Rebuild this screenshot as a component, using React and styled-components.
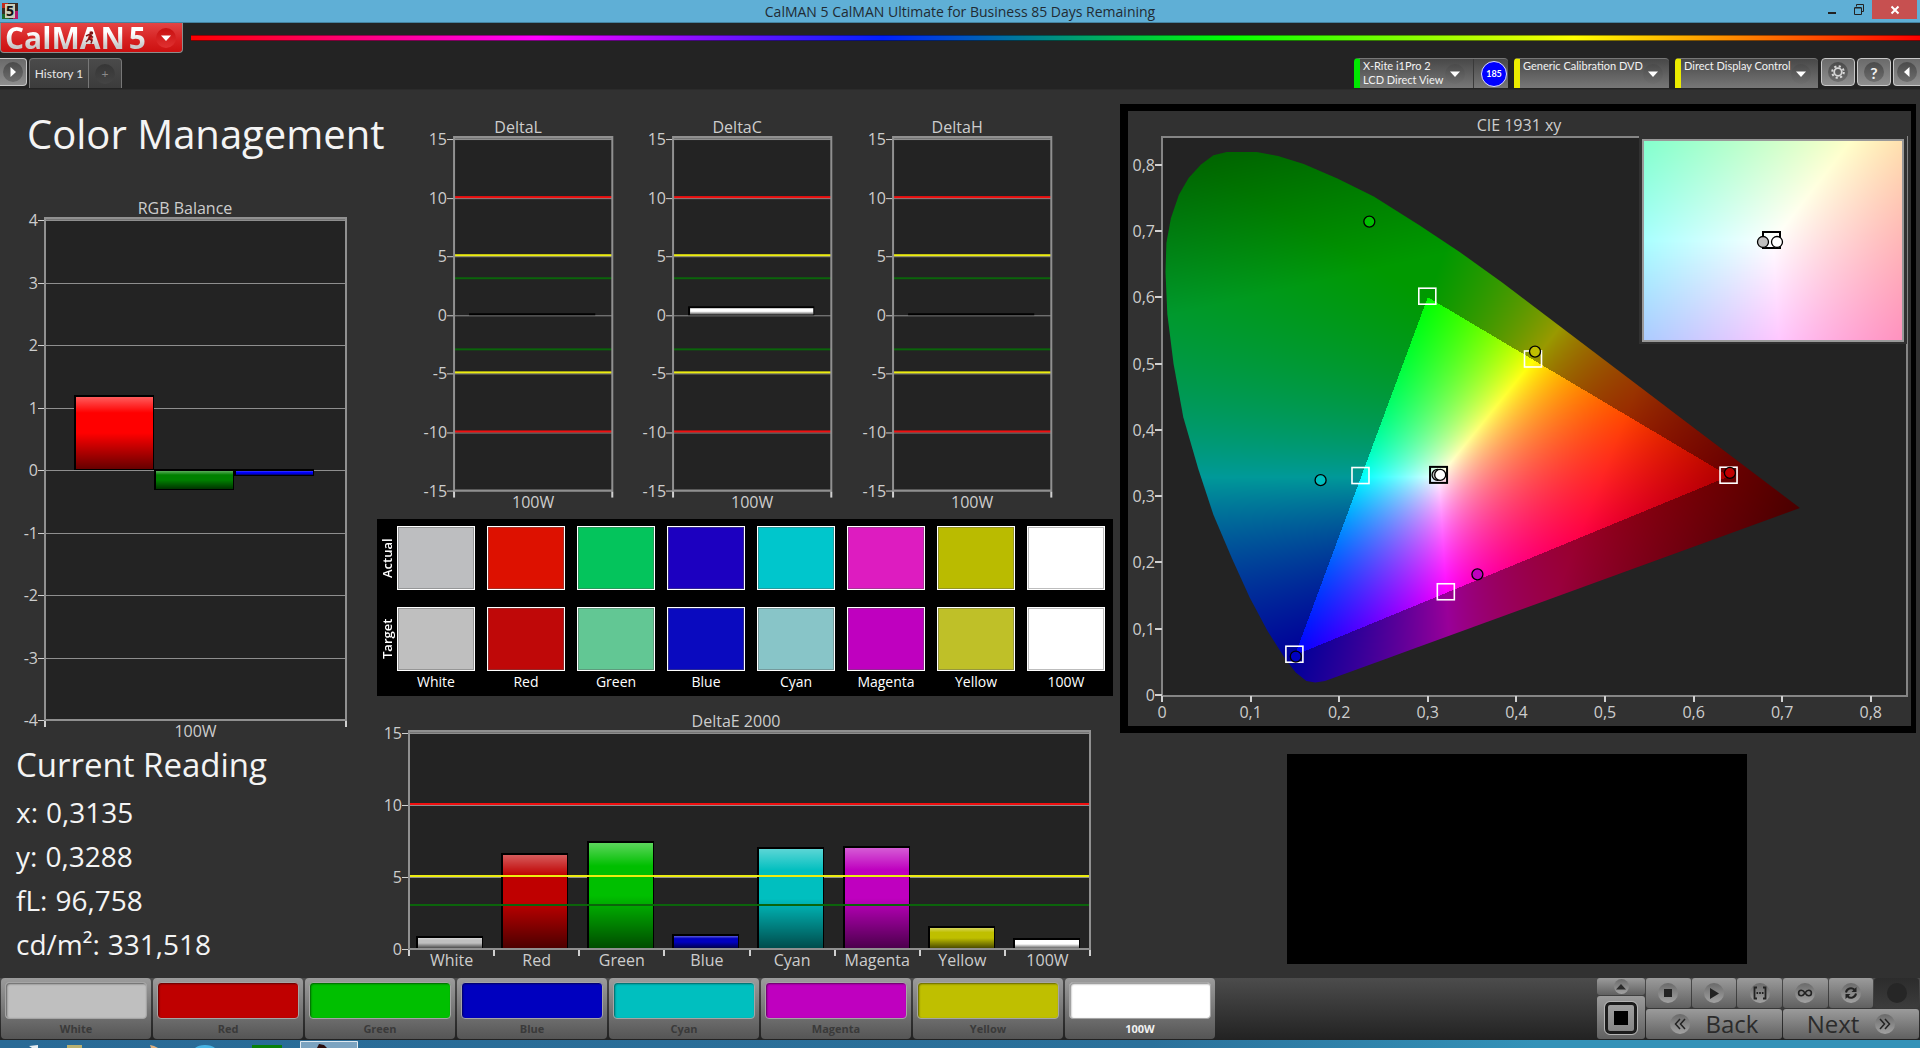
import React, { useEffect, useRef } from "react";
import styled, { createGlobalStyle } from "styled-components";

const GlobalStyle = createGlobalStyle`
  * {
    box-sizing: border-box;
  }

  body {
    margin: 0;
    background: #232323;
    font-family: "Open Sans", "Noto Sans", sans-serif;
  }

  h1, h2, p, dl, dd, dt {
    margin: 0;
    font-weight: 400;
  }

  button {
    margin: 0;
    padding: 0;
    border: 0;
    background: none;
    font-family: inherit;
    color: inherit;
    cursor: pointer;
  }

  svg {
    display: block;
  }
`;

const Shell = styled.div`
  display: flex;
  flex-direction: column;
  min-height: 100vh;
  overflow-x: hidden;
`;

// title bar
const TitleBar = styled.header`
  display: grid;
  grid-template-columns: 1fr auto 1fr;
  height: 23px;
  border-bottom: 1px solid #4583a1;
  background: #5fafd6;
`;

const AppIcon = styled.svg`
  width: 16px;
  height: 16px;
  margin: 3px 0 0 2px;
`;

const WindowTitle = styled.p`
  color: #1f2b33;
  font-size: 14px;
  line-height: 24px;
`;

const WindowButtons = styled.div`
  display: flex;
  justify-content: flex-end;
  padding-right: 3px;
`;

const WindowButton = styled.button`
  display: flex;
  align-items: center;
  justify-content: center;
  width: ${(props) => (props.$close ? 45 : 27)}px;
  height: 19px;
  background: ${(props) => (props.$close ? "#c75050" : "transparent")};
`;

// toolbar
const BrandRow = styled.div`
  display: flex;
  align-items: flex-start;
  gap: 8px;
`;

const Brand = styled.button`
  display: flex;
  align-items: center;
  justify-content: space-between;
  width: 183px;
  height: 30px;
  padding: 0 6px 0 4px;
  border: 1px solid #8d8d8d;
  border-top: 0;
  border-radius: 0 0 4px 4px;
  background: linear-gradient(#e34545, #d62020 60%, #cc1010);
`;

const BrandName = styled.span`
  position: relative;
  display: flex;
  gap: 4px;
  background: linear-gradient(#fff 30%, #c9c9c9 80%);
  background-clip: text;
  color: transparent;
  font-size: 30px;
  font-weight: 700;
  line-height: 28px;
`;

const Runner = styled.svg`
  position: absolute;
  top: 7px;
  left: 78px;
  width: 14px;
  height: 14px;
`;

const Spectrum = styled.div`
  flex: 1;
  height: 6px;
  margin-top: 12px;
  border-top: 1px solid rgba(0, 0, 0, 0.4);
  border-bottom: 1px solid rgba(0, 0, 0, 0.5);
  background: linear-gradient(90deg, #f00, #f0f, #0020ff, #0f0, #ff0, #f00);
`;

const ToolRow = styled.div`
  display: flex;
  justify-content: space-between;
  height: 31px;
  margin-top: 5px;
  font-family: Lato, "Open Sans", sans-serif;
  font-size: 12px;
`;

const ToolGroup = styled.div`
  display: flex;
  gap: ${(props) => props.$gap || 0}px;
`;

const Knob = styled.span`
  display: flex;
  align-items: center;
  justify-content: center;
  flex: none;
  width: ${(props) => (props.$small ? 15 : 20)}px;
  height: ${(props) => (props.$small ? 15 : 20)}px;
  border-radius: 50%;
  background: ${(props) => props.$fill || "linear-gradient(#4a4a4a, #6e6e6e)"};
`;

const SquareButton = styled.button`
  display: flex;
  align-items: center;
  justify-content: center;
  width: ${(props) => props.$width || 34}px;
  height: 28px;
  border: 1px solid #c8c8c8;
  border-left-width: ${(props) => (props.$edge === "left" ? 0 : 1)}px;
  border-right-width: ${(props) => (props.$edge === "right" ? 0 : 1)}px;
  border-radius: ${(props) =>
    props.$edge === "left"
      ? "0 4px 4px 0"
      : props.$edge === "right"
      ? "4px 0 0 4px"
      : "4px"};
  background: linear-gradient(#6a6a6a, #8f8f8f);
  color: #f0f0f0;
  font-size: 16px;
`;

const Tabs = styled.div`
  display: flex;
  height: 30px;
  border: 1px solid #777;
  border-bottom: 0;
  border-radius: 4px 4px 0 0;
  background: linear-gradient(#4a4a4a, #3c3c3c);
`;

const Tab = styled.button`
  display: flex;
  align-items: center;
  justify-content: center;
  width: ${(props) => (props.$add ? 33 : 58)}px;
  border-left: ${(props) => (props.$add ? "1px solid #777" : "0")};
  color: ${(props) => (props.$add ? "#8a8a8a" : "#e6e6e6")};
  font-size: 12px;
`;

const Device = styled.div`
  display: flex;
  height: 30px;
  width: ${(props) => props.$width}px;
  border-left: 6px solid ${(props) => props.$status};
  border-top: 1px solid #777;
  border-radius: 4px 4px 0 0;
  background: linear-gradient(#484848, #777);
  color: #f2f2f2;
`;

const DeviceButton = styled.button`
  display: flex;
  flex: 1;
  justify-content: space-between;
  align-items: flex-start;
  padding: 0 8px 0 3px;
  text-align: left;
  font-size: 11px;
  line-height: 14px;
  white-space: nowrap;

  ${Knob} {
    margin-top: 5px;
  }
`;

const Counter = styled.span`
  display: flex;
  align-items: center;
  justify-content: flex-end;
  width: 35px;
  padding-right: 1px;
  border-left: 1px solid #3a3a3a;
`;

const CounterDot = styled.span`
  width: 26px;
  height: 26px;
  border: 1px solid #dcdcff;
  border-radius: 50%;
  background: #00f;
  color: #fff;
  font-size: 9px;
  font-weight: 700;
  line-height: 24px;
  text-align: center;
`;

// workspace
const Workspace = styled.main`
  display: grid;
  grid-template-columns: minmax(0, 376fr) minmax(0, 738fr) minmax(0, 806fr);
  flex: 1;
  align-items: start;
  border-top: 1px solid #2b2b2b;
  background: #313131;
`;

const Column = styled.section`
  display: flex;
  flex-direction: column;
`;

const PageTitle = styled.h1`
  padding: 20px 0 0 27px;
  margin-bottom: 38px;
  color: #f4f4f4;
  font-size: 40px;
  line-height: 48px;
  white-space: nowrap;
`;

const ReadingTitle = styled.h2`
  padding-left: 16px;
  margin-bottom: 4px;
  color: #f4f4f4;
  font-size: 33px;
  line-height: 42px;
`;

const Readings = styled.dl`
  padding-left: 16px;
  color: #f4f4f4;
  font-size: 28px;
  line-height: 44px;
`;

const Reading = styled.div`
  display: flex;
  gap: 8px;
`;

const Chart = styled.svg`
  width: 100%;
  height: auto;
  font-family: "Open Sans", "Noto Sans", sans-serif;
  font-size: 16px;
  fill: #cdcdcd;
`;

const DeltaRow = styled.div`
  display: grid;
  grid-template-columns: repeat(3, minmax(0, 1fr));
  padding: 28px 41px 0 39px;
`;

const SwatchPanel = styled.div`
  display: flex;
  flex-direction: column;
  margin: 5px 1px 10px;
  padding: 7px 8px 3px 0;
  background: #000;
  color: #fff;
  font-size: 14px;
`;

const SwatchRow = styled.div`
  display: grid;
  grid-template-columns: 20px minmax(0, 1fr);
  margin-bottom: ${(props) => props.$gap || 0}px;
`;

const SwatchLine = styled.div`
  display: grid;
  grid-template-columns: repeat(8, minmax(0, 1fr));
  grid-column: 2;
  gap: 12px;
`;

const RowName = styled.span`
  writing-mode: vertical-rl;
  transform: rotate(180deg);
  height: 64px;
  font-size: 13px;
  font-weight: 600;
  line-height: 20px;
  text-align: center;
`;

const Swatch = styled.span`
  height: 64px;
  border: 1px solid #fff;
  box-shadow: inset 0 0 0 1px rgba(90, 90, 90, 0.4);
  background: ${(props) => props.$fill};
`;

const SwatchName = styled.span`
  line-height: 22px;
  text-align: center;
`;

const CiePanel = styled.div`
  margin: 14px 4px 21px 6px;
  border: solid #000;
  border-width: 7px 5px 7px 8px;
`;

const Preview = styled.div`
  align-self: center;
  width: 57%;
  aspect-ratio: 459 / 210;
  background: #000;
`;

// bottom bar
const BottomBar = styled.footer`
  display: flex;
  justify-content: space-between;
  height: 62px;
  padding-right: 1px;
  background: linear-gradient(#4c4c4c, #222);
`;

const PatchList = styled.div`
  display: flex;
  gap: 2px;
  padding-left: 1px;
`;

const PatchButton = styled.button`
  display: flex;
  flex-direction: column;
  align-items: center;
  width: 150px;
  height: 61px;
  padding: 4px 4px 0;
  border-radius: 4px;
  background: linear-gradient(#9c9c9c, #555);
  color: ${(props) => (props.$active ? "#f0f0f0" : "#3a3a3a")};
  font-size: 11px;
  font-weight: 700;
  line-height: 20px;
`;

const PatchColor = styled.span`
  width: 100%;
  height: 38px;
  border: 1px solid #a5a5a5;
  border-radius: 4px;
  box-shadow: inset 1px 1px 2px rgba(0, 0, 0, 0.5);
  background: ${(props) => props.$fill};
`;

const Transport = styled.div`
  display: grid;
  grid-template-columns: 48px 273px;
  gap: 1px;
  height: 61px;
  color: #2b2b2b;
`;

const StopColumn = styled.div`
  display: grid;
  grid-template-rows: 17px 43px;
  gap: 1px;
`;

const Controls = styled.div`
  display: grid;
  grid-template-columns: repeat(6, 1fr);
  grid-template-rows: 30px 30px;
  gap: 1px;
`;

const Control = styled.button`
  display: flex;
  align-items: center;
  justify-content: center;
  gap: 16px;
  grid-column: span ${(props) => props.$span || 1};
  border-radius: 3px;
  background: ${(props) =>
    props.$dark
      ? "linear-gradient(#2c2c2c, #3c3c3c)"
      : "linear-gradient(#9b9b9b, #606060)"};
  font-size: 24px;
  line-height: 28px;
`;

const StopFrame = styled.span`
  display: flex;
  align-items: center;
  justify-content: center;
  width: 32px;
  height: 32px;
  border: 3px solid #1c1c1c;
  border-radius: 5px;
  outline: 1px solid #b5b5b5;
  background: linear-gradient(#a0a0a0, #858585);
`;

const Taskbar = styled.div`
  height: 8px;
  background: linear-gradient(90deg, #296a96, #2b719b 60%, #3492b8 80%);
`;

const names = ["White", "Red", "Green", "Blue", "Cyan", "Magenta", "Yellow", "100W"];

const patchColors = [
  "#bfbfbf", "#bf0000", "#00bf00", "#0000bf",
  "#00bfbf", "#bf00bf", "#bfbf00", "#ffffff",
];

const actualColors = [
  "#bdbec0", "#dd1100", "#04c45c", "#1c00c0",
  "#00c6cc", "#dd1cc0", "#babb00", "#ffffff",
];

const targetColors = [
  "#bfbfbf", "#bf0808", "#62c794", "#0a0abf",
  "#88c5c8", "#bf00bf", "#bfc028", "#ffffff",
];

const deltaE = [0.85, 6.6, 7.4, 0.95, 7.0, 7.1, 1.5, 0.7];

const readings = [
  ["x:", "0,3135"],
  ["y:", "0,3288"],
  ["fL:", "96,758"],
  ["cd/m²:", "331,518"],
];

const limits = [
  [10, "#f01010"],
  [5, "#ecec10"],
  [3, "#0b640b"],
];

const mirrored = [...limits, ...limits.map(([v, color]) => [-v, color])];

function BarChart({ id, title, titleX, size, plot, range, step, bars, categories, limits = [] }) {
  const [width, height] = size;
  const [left, top, right, bottom] = plot;
  const [min, max] = range;
  const y = (v) => Math.round(bottom - ((v - min) / (max - min)) * (bottom - top));
  const slot = (right - left) / categories.length;

  const ticks = [];
  for (let v = min; v <= max; v += step) ticks.push(v);

  return (
    <Chart viewBox={`0 0 ${width} ${height}`} role="img" aria-label={title}>
      <defs>
        <linearGradient id={`${id}-gloss`} x1="0" y1="0" x2="0" y2="1">
          <stop offset="0" stopColor="#fff" stopOpacity="0.36" />
          <stop offset="0.22" stopColor="#fff" stopOpacity="0" />
          <stop offset="0.5" stopColor="#000" stopOpacity="0" />
          <stop offset="1" stopColor="#000" stopOpacity="0.6" />
        </linearGradient>
      </defs>
      <text x={titleX} y={top - 6} textAnchor="middle">{title}</text>
      <rect x={left} y={top - 2} width={right - left} height={bottom - top + 2} fill="#232323" />
      <rect x={left} y={top - 2} width={right - left} height="3" fill="#747474" />
      {ticks.map((v) => (
        <g key={v}>
          <rect x={left} y={y(v)} width={right - left} height="1" fill="#8e8e8e" />
          <rect x={left - 7} y={y(v)} width="7" height="1" fill="#d0d0d0" />
          <text x={left - 7} y={y(v) + 6} textAnchor="end">{v}</text>
        </g>
      ))}
      {bars.map((bar) => {
        const y1 = Math.min(y(bar.value), y(0));
        const h = Math.max(1, Math.abs(y(bar.value) - y(0)));
        return (
          <g key={bar.x}>
            <rect x={bar.x} y={y1 - 1} width={bar.width} height={h + 1} fill="#000" />
            {h > 1 && (
              <>
                <rect x={bar.x + 2} y={y1 + 1} width={bar.width - 3} height={h - 2} fill={bar.fill} />
                <rect x={bar.x + 2} y={y1 + 1} width={bar.width - 3} height={h - 2} fill={`url(#${id}-gloss)`} />
              </>
            )}
          </g>
        );
      })}
      {limits.map(([v, color]) => (
        <rect key={v} x={left} y={y(v) - 2} width={right - left} height="2" fill={color} />
      ))}
      <path d={`M${left} ${top - 2}V${bottom}H${right}V${top - 2}Z`} fill="none" stroke="#909090" strokeWidth="2" />
      {categories.map((name, i) => (
        <g key={name}>
          <rect x={Math.round(left + slot * i) - 1} y={bottom + 1} width="2" height="6" fill="#d0d0d0" />
          <text x={left + slot * (i + 0.5)} y={bottom + 17} textAnchor="middle">{name}</text>
        </g>
      ))}
      <rect x={right - 1} y={bottom + 1} width="2" height="6" fill="#d0d0d0" />
    </Chart>
  );
}

// chromaticity -> full brightness rgb, dimmed outside of the gamut and towards the ends of the spectrum
function chromaColor(x, y) {
  const z = 1 - x - y;
  const r = 3.2406 * x - 1.5372 * y - 0.4986 * z;
  const g = -0.9689 * x + 1.8758 * y + 0.0415 * z;
  const b = 0.0557 * x - 0.204 * y + 1.057 * z;
  const peak = Math.max(r, g, b);
  let level = Math.min(r, g, b) < 0 ? 0.6 : 1;

  const deepRed = x - 0.29 * (y - 0.33) - 0.497;
  const deepGreen = y - 0.3 * (x - 0.1) - 0.6;
  if (deepRed > 0) level *= 1 - 2.2 * deepRed;
  if (deepGreen > 0) level *= 1 - 1.5 * deepGreen;

  return [r, g, b].map((c) => (Math.max(0, c) / peak) * 255 * level);
}

function ChromaField({ width, height, x0, x1, y0, y1 }) {
  const ref = useRef(null);

  useEffect(() => {
    const ctx = ref.current.getContext("2d");
    const image = ctx.createImageData(width, height);
    for (let j = 0; j < height; j++) {
      for (let i = 0; i < width; i++) {
        const x = x0 + ((x1 - x0) * (i + 0.5)) / width;
        const y = y1 - ((y1 - y0) * (j + 0.5)) / height;
        image.data.set([...chromaColor(x, y), 255], (j * width + i) * 4);
      }
    }
    ctx.putImageData(image, 0, 0);
  }, [width, height, x0, x1, y0, y1]);

  return <Field ref={ref} width={width} height={height} />;
}

const Field = styled.canvas`
  display: block;
`;

const locus = [
  [0.184, 0.021], [0.173, 0.019], [0.163, 0.021], [0.151, 0.034], [0.14, 0.053],
  [0.119, 0.097], [0.099, 0.147], [0.079, 0.206], [0.058, 0.272], [0.041, 0.341],
  [0.024, 0.419], [0.013, 0.5], [0.006, 0.575], [0.004, 0.638], [0.005, 0.682],
  [0.01, 0.719], [0.019, 0.754], [0.03, 0.78], [0.044, 0.8], [0.058, 0.814],
  [0.073, 0.819], [0.107, 0.819], [0.131, 0.813], [0.16, 0.801], [0.198, 0.779],
  [0.239, 0.752], [0.291, 0.708], [0.336, 0.668], [0.384, 0.622], [0.72, 0.282],
];

const targets = [
  [0.3, 0.6], [0.64, 0.33], [0.15, 0.06], [0.2246, 0.3295], [0.3209, 0.1542], [0.4193, 0.5053],
];

const measured = [
  [0.234, 0.714, "#00bf00"],
  [0.421, 0.518, "#bfbf00"],
  [0.179, 0.324, "#00bfbf"],
  [0.356, 0.182, "#bf00bf"],
  [0.641, 0.335, "#bf0000"],
  [0.151, 0.058, "#0000bf"],
  [0.311, 0.332, "#bfbfbf"],
  [0.314, 0.332, "#ffffff"],
];

function CieChart() {
  const left = 34;
  const bottom = 584;
  const px = (x) => left + x * 886;
  const py = (y) => bottom - y * 663;
  const outline = `M${locus.map(([x, y]) => `${px(x).toFixed(1)} ${py(y).toFixed(1)}`).join("L")}Z`;
  const steps = [0, 1, 2, 3, 4, 5, 6, 7, 8];
  const label = (n) => (n === 0 ? "0" : `0,${n}`);

  return (
    <Chart viewBox="0 0 783 615" role="img" aria-label="CIE 1931 xy">
      <clipPath id="locus">
        <path d={outline} />
      </clipPath>
      <text x="391" y="20" textAnchor="middle">CIE 1931 xy</text>
      <rect x={left} y="26" width="745" height="559" fill="#232323" stroke="#858585" strokeWidth="2" />
      {steps.map((n) => (
        <g key={n}>
          <rect x={left - 7} y={Math.round(py(n / 10)) - 1} width="7" height="2" fill="#d0d0d0" />
          <text x={left - 7} y={py(n / 10) + 6} textAnchor="end">{label(n)}</text>
          <rect x={Math.round(px(n / 10)) - 1} y={bottom + 1} width="2" height="6" fill="#d0d0d0" />
          <text x={px(n / 10)} y={bottom + 23} textAnchor="middle">{label(n)}</text>
        </g>
      ))}
      <g clipPath="url(#locus)">
        <foreignObject x={left} y="26" width="745" height="558">
          <ChromaField width={745} height={558} x0={0} x1={745 / 886} y0={0} y1={558 / 663} />
        </foreignObject>
      </g>
      {targets.map(([x, y]) => (
        <rect key={x} x={px(x) - 9} y={py(y) - 9} width="17" height="16" fill="none" stroke="#fff" strokeWidth="1.6" />
      ))}
      <rect x={px(0.3127) - 9} y={py(0.332) - 8} width="17" height="16" fill="none" stroke="#000" strokeWidth="2" />
      {measured.map(([x, y, fill]) => (
        <circle key={x} cx={px(x)} cy={py(y)} r="5.5" fill={fill} stroke="#000" strokeWidth="1.3" />
      ))}

      {/* close-up of the white point */}
      <rect x="511" y="25" width="268" height="208" fill="#313131" />
      <foreignObject x="515" y="29" width="260" height="201">
        <ChromaField width={260} height={201} x0={0.2872} x1={0.3382} y0={0.3035} y1={0.3545} />
      </foreignObject>
      <rect x="515" y="29" width="260" height="201" fill="none" stroke="#999" strokeWidth="2" />
      <rect x="635" y="121" width="17" height="16" fill="none" stroke="#000" strokeWidth="2" />
      <circle cx="635" cy="131" r="5.5" fill="#bfbfbf" stroke="#000" strokeWidth="1.3" />
      <circle cx="649" cy="131" r="5.5" fill="#fff" stroke="#000" strokeWidth="1.3" />
    </Chart>
  );
}

const Caret = ({ rotate = 0, color = "#fff" }) => (
  <svg width="12" height="12" viewBox="0 0 12 12" fill={color}>
    <path d="M1 3.5h10L6 9z" transform={`rotate(${rotate} 6 6)`} />
  </svg>
);

const controlIcons = [
  ["Stop", <path d="M4 4h8v8H4z" fill="#222" />],
  ["Play", <path d="M4 3l9 5.5L4 14z" fill="#222" />],
  [
    "Read series",
    <path d="M5 2.5H2.5v11H5M11 2.5h2.5v11H11M4.5 8h1.6M7.2 8h1.6M9.9 8h1.6" fill="none" stroke="#222" strokeWidth="1.8" />,
  ],
  [
    "Read continuous",
    <path d="M8 8C6.500 5.800 5.500 5.300 4.300 5.300a2.700 2.700 0 0 0 0 5.400C5.500 10.700 6.500 10.200 8 8s2.500-2.700 3.700-2.700a2.700 2.700 0 0 1 0 5.400C10.500 10.700 9.500 10.200 8 8z" fill="none" stroke="#222" strokeWidth="1.6" />,
  ],
  [
    "Refresh",
    <g fill="none" stroke="#222" strokeWidth="2">
      <path d="M3 7.500a5 5 0 0 1 8.500-2.700M13 8.500a5 5 0 0 1-8.500 2.700" />
      <path d="M13.500 2v5h-5zM2.500 14V9h5z" fill="#222" stroke="none" />
    </g>,
  ],
];

const lightKnob = "linear-gradient(#6a6a6a, #a2a2a2)";

const App = () => {
  return (
    <>
      <GlobalStyle />
      <Shell>
        <TitleBar>
          <AppIcon viewBox="0 0 16 16">
            <rect width="16" height="16" fill="#3c2c22" />
            <path d="M0 0h6v5H0z" fill="#c22a1a" />
            <path d="M0 11h7v5H0z" fill="#1d6b2b" />
            <path d="M11 8h5v8h-5z" fill="#b3166a" />
            <path d="M3 1h10v14H3z" fill="#c9cdb8" />
            <text x="4" y="13" fontSize="14" fontWeight="700" fill="#111">5</text>
          </AppIcon>
          <WindowTitle>CalMAN 5 CalMAN Ultimate for Business 85 Days Remaining</WindowTitle>
          <WindowButtons>
            <WindowButton aria-label="Minimize">
              <svg width="10" height="10"><path d="M1 7h8v2H1z" fill="#222" /></svg>
            </WindowButton>
            <WindowButton aria-label="Restore">
              <svg width="12" height="12" viewBox="0 0 12 12" fill="none" stroke="#222">
                <path d="M3.500 2.500v-2h7v7h-2M1.500 4h7v6.500h-7zM1.500 3.500h7" />
              </svg>
            </WindowButton>
            <WindowButton $close aria-label="Close">
              <svg width="10" height="10" viewBox="0 0 10 10" stroke="#fff" strokeWidth="2">
                <path d="M1.500 1.500l7 7M8.500 1.500l-7 7" />
              </svg>
            </WindowButton>
          </WindowButtons>
        </TitleBar>

        <BrandRow>
          <Brand>
            <BrandName>
              <span>CalMAN</span>
              <span>5</span>
              <Runner viewBox="0 0 14 14" fill="none" stroke="#7a1414" strokeWidth="1.500">
                <circle cx="8.500" cy="2" r="1" fill="#7a1414" />
                <path d="M3 5l3-1.500 2 1 2 2M7.500 5L6 8l3 1.500-1 3M6 8l-3 3" />
              </Runner>
            </BrandName>
            <Knob $fill="linear-gradient(#c81010, #e03030)">
              <Caret />
            </Knob>
          </Brand>
          <Spectrum />
        </BrandRow>

        <ToolRow>
          <ToolGroup $gap={2}>
            <SquareButton $width={27} $edge="left" aria-label="Show workflow">
              <Knob>
                <Caret rotate={-90} />
              </Knob>
            </SquareButton>
            <Tabs>
              <Tab>History 1</Tab>
              <Tab $add aria-label="Add history">
                <Knob $fill="linear-gradient(#363636, #444)">+</Knob>
              </Tab>
            </Tabs>
          </ToolGroup>

          <ToolGroup $gap={3}>
            <ToolGroup $gap={6}>
              <Device $status="#00e800" $width={154}>
                <DeviceButton>
                  <span>
                    X-Rite i1Pro 2
                    <br />
                    LCD Direct View
                  </span>
                  <Knob>
                    <Caret />
                  </Knob>
                </DeviceButton>
                <Counter>
                  <CounterDot>185</CounterDot>
                </Counter>
              </Device>
              <Device $status="#ecec00" $width={155}>
                <DeviceButton>
                  Generic Calibration DVD
                  <Knob>
                    <Caret />
                  </Knob>
                </DeviceButton>
              </Device>
              <Device $status="#ecec00" $width={143}>
                <DeviceButton>
                  Direct Display Control
                  <Knob>
                    <Caret />
                  </Knob>
                </DeviceButton>
              </Device>
            </ToolGroup>
            <ToolGroup $gap={2}>
              <SquareButton aria-label="Settings">
                <Knob>
                  <svg width="14" height="14" viewBox="0 0 14 14" fill="none" stroke="#d8d8d8">
                    <circle cx="7" cy="7" r="3.800" strokeWidth="1.800" />
                    <circle cx="7" cy="7" r="5.800" strokeWidth="2" strokeDasharray="2.200 2.355" />
                  </svg>
                </Knob>
              </SquareButton>
              <SquareButton aria-label="Help">
                <Knob>
                  <b>?</b>
                </Knob>
              </SquareButton>
              <SquareButton $width={27} $edge="right" aria-label="Show panel">
                <Knob>
                  <Caret rotate={90} />
                </Knob>
              </SquareButton>
            </ToolGroup>
          </ToolGroup>
        </ToolRow>

        <Workspace>
          <Column>
            <PageTitle>Color Management</PageTitle>
            <BarChart
              id="rgb"
              title="RGB Balance"
              titleX={185}
              size={[376, 548]}
              plot={[45, 24, 346, 524]}
              range={[-4, 4]}
              step={1}
              categories={["100W"]}
              bars={[
                { x: 74, width: 80, value: 1.18, fill: "#ff0000" },
                { x: 154, width: 80, value: -0.32, fill: "#008000" },
                { x: 234, width: 80, value: -0.1, fill: "#0000ff" },
              ]}
            />
            <ReadingTitle>Current Reading</ReadingTitle>
            <Readings>
              {readings.map(([name, value]) => (
                <Reading key={name}>
                  <dt>{name}</dt>
                  <dd>{value}</dd>
                </Reading>
              ))}
            </Readings>
          </Column>

          <Column>
            <DeltaRow>
              {[["DeltaL", 0.04], ["DeltaC", 0.6], ["DeltaH", 0.04]].map(([title, value]) => (
                <BarChart
                  key={title}
                  id={title}
                  title={title}
                  titleX={103}
                  size={[219, 395]}
                  plot={[39, 21, 197, 372]}
                  range={[-15, 15]}
                  step={5}
                  categories={["100W"]}
                  limits={mirrored}
                  bars={[{ x: 54, width: 126, value, fill: "#ffffff" }]}
                />
              ))}
            </DeltaRow>

            <SwatchPanel>
              <SwatchRow $gap={17}>
                <RowName>Actual</RowName>
                <SwatchLine>
                  {actualColors.map((fill, i) => (
                    <Swatch key={names[i]} $fill={fill} />
                  ))}
                </SwatchLine>
              </SwatchRow>
              <SwatchRow>
                <RowName>Target</RowName>
                <SwatchLine>
                  {targetColors.map((fill, i) => (
                    <Swatch key={names[i]} $fill={fill} />
                  ))}
                </SwatchLine>
              </SwatchRow>
              <SwatchRow>
                <SwatchLine>
                  {names.map((name) => (
                    <SwatchName key={name}>{name}</SwatchName>
                  ))}
                </SwatchLine>
              </SwatchRow>
            </SwatchPanel>

            <BarChart
              id="delta-e"
              title="DeltaE 2000"
              titleX={360}
              size={[738, 270]}
              plot={[33, 27, 714, 243]}
              range={[0, 15]}
              step={5}
              categories={names}
              limits={limits}
              bars={deltaE.map((value, i) => ({
                x: 40 + Math.round(i * 85.3),
                width: 67,
                value,
                fill: patchColors[i],
              }))}
            />
          </Column>

          <Column>
            <CiePanel>
              <CieChart />
            </CiePanel>
            <Preview />
          </Column>
        </Workspace>

        <BottomBar>
          <PatchList>
            {names.map((name, i) => (
              <PatchButton key={name} $active={name === "100W"}>
                <PatchColor $fill={patchColors[i]} />
                {name}
              </PatchButton>
            ))}
          </PatchList>

          <Transport>
            <StopColumn>
              <Control aria-label="Expand">
                <Knob $small $fill={lightKnob}>
                  <Caret rotate={180} color="#2b2b2b" />
                </Knob>
              </Control>
              <Control aria-label="Abort">
                <StopFrame>
                  <svg width="14" height="14"><rect width="14" height="14" /></svg>
                </StopFrame>
              </Control>
            </StopColumn>
            <Controls>
              {controlIcons.map(([name, icon]) => (
                <Control key={name} aria-label={name}>
                  <Knob $fill={lightKnob}>
                    <svg width="16" height="16" viewBox="0 0 16 16">{icon}</svg>
                  </Knob>
                </Control>
              ))}
              <Control $dark aria-label="Record">
                <Knob $fill="#262626" />
              </Control>
              <Control $span={3}>
                <Knob $fill={lightKnob}>
                  <svg width="14" height="14" viewBox="0 0 14 14" fill="none" stroke="#222" strokeWidth="1.500">
                    <path d="M7 2L2.500 7 7 12M12 2L7.500 7l4.500 5" />
                  </svg>
                </Knob>
                Back
              </Control>
              <Control $span={3}>
                Next
                <Knob $fill={lightKnob}>
                  <svg width="14" height="14" viewBox="0 0 14 14" fill="none" stroke="#222" strokeWidth="1.500">
                    <path d="M2 2l4.500 5L2 12M7 2l4.500 5L7 12" />
                  </svg>
                </Knob>
              </Control>
            </Controls>
          </Transport>
        </BottomBar>

        <Taskbar>
          <svg width="360" height="8">
            <path d="M29 6l9-1v3h-6z" fill="#e8eef2" />
            <path d="M67 5h15v3H67z" fill="#b8b070" />
            <path d="M150 5l4 1 4 2h-7z" fill="#e0b080" />
            <path d="M195 8c4-4 16-4 20 0z" fill="#48b4e4" />
            <path d="M252 5h30v3h-30z" fill="#0a800a" />
            <path d="M300.500 8V1.500h57V8" fill="#7ba3c0" stroke="#dfe9f0" />
            <path d="M317 8l2-4 5 1 3 3z" fill="#2a0c0c" />
          </svg>
        </Taskbar>
      </Shell>
    </>
  );
};

export default App;
